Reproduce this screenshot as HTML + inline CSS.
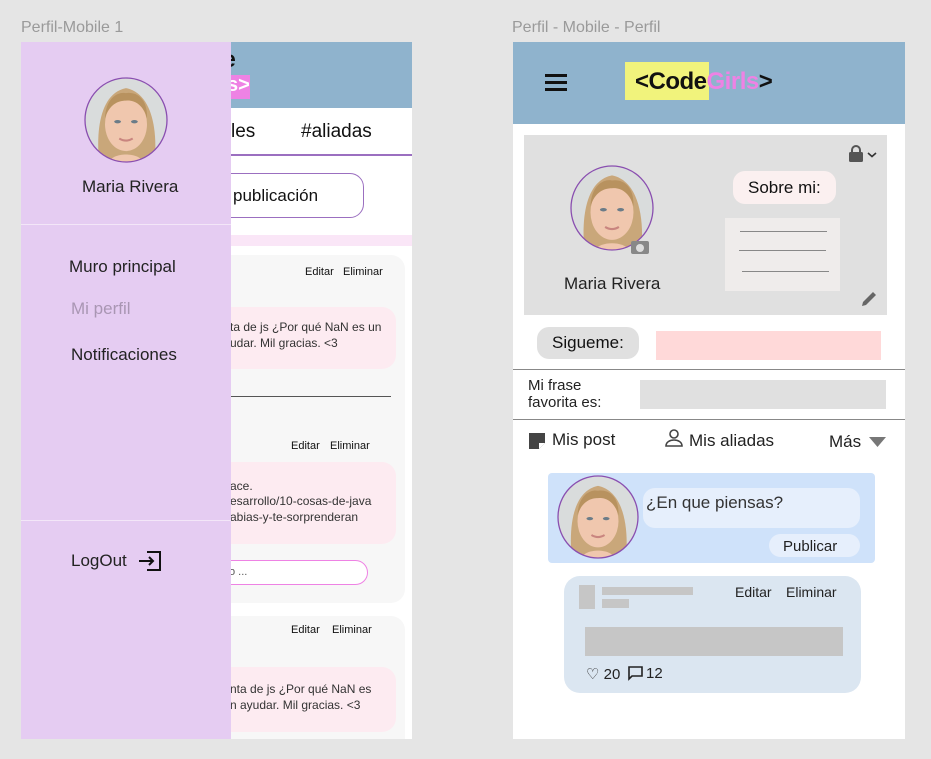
<!DOCTYPE html>
<html><head><meta charset="utf-8"><style>
*{margin:0;padding:0;box-sizing:border-box}
body{width:931px;height:759px;background:#e5e5e5;font-family:"Liberation Sans",sans-serif;position:relative;overflow:hidden;color:#111}
.a{position:absolute}
.t{position:absolute;white-space:nowrap}
</style></head><body>
<svg width="0" height="0" style="position:absolute"><defs>
<symbol id="face" viewBox="0 0 100 100">
<rect width="100" height="100" fill="#d9dcdc"/>
<path d="M18 100 C14 60 20 18 50 12 C80 18 88 60 84 100Z" fill="#c9a77a"/>
<ellipse cx="50" cy="55" rx="25" ry="32" fill="#f0c7ae"/>
<path d="M25 48 C26 22 42 16 50 18 C62 16 76 24 75 48 C70 30 58 26 50 27 C40 27 30 32 25 48Z" fill="#b8925f"/>
<ellipse cx="40" cy="52" rx="4" ry="2" fill="#6b7c88"/><ellipse cx="60" cy="52" rx="4" ry="2" fill="#6b7c88"/>
<path d="M42 72 Q50 77 58 72" stroke="#c9857f" stroke-width="2.5" fill="none"/>
<path d="M30 100 C34 88 66 88 70 100Z" fill="#f0c7ae"/>
</symbol></defs></svg>

<div class="t" style="left:21px;top:19px;font-size:16px;color:#9a9a9a">Perfil-Mobile 1</div>
<div class="t" style="left:512px;top:19px;font-size:16px;color:#9a9a9a">Perfil - Mobile - Perfil</div>

<!-- LEFT FRAME -->
<div class="a" style="left:21px;top:42px;width:391px;height:697px;background:#fff;overflow:hidden">
  <div class="a" style="left:0;top:0;width:391px;height:66px;background:#8fb3cd"></div>
  <div class="t" style="left:202px;top:4px;font-size:23px;font-weight:bold">e</div>
  <div class="a" style="left:200px;top:33px;width:29px;height:24px;background:#ee82e4"></div>
  <div class="t" style="left:206px;top:32px;font-size:20px;font-weight:bold;color:#fff">s&gt;</div>
  <div class="t" style="left:210px;top:79px;font-size:19px">les</div>
  <div class="t" style="left:280px;top:79px;font-size:19px">#aliadas</div>
  <div class="a" style="left:200px;top:112px;width:191px;height:2px;background:#9b6fc0"></div>
  <div class="a" style="left:150px;top:131px;width:193px;height:45px;border:1.5px solid #9b6fc0;border-radius:14px;background:#fff"></div>
  <div class="t" style="left:212px;top:144px;font-size:17px">publicación</div>
  <div class="a" style="left:200px;top:193px;width:191px;height:11px;background:#fae6f7"></div>
  <div class="a" style="left:150px;top:213px;width:234px;height:348px;background:#f7f7f7;border-radius:14px"></div>
  <div class="t" style="left:284px;top:224px;font-size:11px">Editar</div>
  <div class="t" style="left:322px;top:224px;font-size:11px">Eliminar</div>
  <div class="a" style="left:150px;top:265px;width:225px;height:62px;background:#fdebf1;border-radius:14px"></div>
  <div class="t" style="left:209px;top:278px;font-size:12px;color:#333">ta de js ¿Por qué NaN es un</div>
  <div class="t" style="left:209px;top:294px;font-size:12px;color:#333">udar. Mil gracias. &lt;3</div>
  <div class="a" style="left:200px;top:354px;width:170px;height:1px;background:#555"></div>
  <div class="t" style="left:270px;top:398px;font-size:11px">Editar</div>
  <div class="t" style="left:309px;top:398px;font-size:11px">Eliminar</div>
  <div class="a" style="left:150px;top:420px;width:225px;height:82px;background:#fdebf1;border-radius:14px"></div>
  <div class="t" style="left:209px;top:437px;font-size:12px;color:#333">ace.</div>
  <div class="t" style="left:209px;top:452px;font-size:12px;color:#333">esarrollo/10-cosas-de-java</div>
  <div class="t" style="left:209px;top:468px;font-size:12px;color:#333">abias-y-te-sorprenderan</div>
  <div class="a" style="left:150px;top:518px;width:197px;height:25px;border:1.5px solid #ee82e4;border-radius:13px;background:#fff"></div>
  <div class="t" style="left:208px;top:524px;font-size:11px;color:#555">o ...</div>
  <div class="a" style="left:150px;top:574px;width:234px;height:140px;background:#f7f7f7;border-radius:14px"></div>
  <div class="t" style="left:270px;top:582px;font-size:11px">Editar</div>
  <div class="t" style="left:311px;top:582px;font-size:11px">Eliminar</div>
  <div class="a" style="left:150px;top:625px;width:225px;height:65px;background:#fdebf1;border-radius:14px"></div>
  <div class="t" style="left:209px;top:640px;font-size:12px;color:#333">nta de js ¿Por qué NaN es</div>
  <div class="t" style="left:209px;top:656px;font-size:12px;color:#333">n ayudar. Mil gracias. &lt;3</div>
  <div class="a" style="left:0;top:0;width:210px;height:697px;background:#e5ccf2"></div>
  <div class="a" style="left:0;top:182px;width:210px;height:1px;background:#f3e6f8"></div>
  <div class="a" style="left:0;top:478px;width:210px;height:1px;background:#f3e6f8"></div>
  <svg class="a" style="left:63px;top:35px" width="84" height="86"><clipPath id="c1"><ellipse cx="42" cy="43" rx="41" ry="42"/></clipPath><use href="#face" width="84" height="86" preserveAspectRatio="none" clip-path="url(#c1)"/><ellipse cx="42" cy="43" rx="41" ry="42" fill="none" stroke="#8a4fb0" stroke-width="1.3"/></svg>
  <div class="t" style="left:61px;top:135px;font-size:17px;color:#222">Maria Rivera</div>
  <div class="t" style="left:48px;top:215px;font-size:17px;color:#222">Muro principal</div>
  <div class="t" style="left:50px;top:257px;font-size:17px;color:#a996b3">Mi perfil</div>
  <div class="t" style="left:50px;top:303px;font-size:17px;color:#222">Notificaciones</div>
  <div class="t" style="left:50px;top:509px;font-size:17px;color:#222">LogOut</div>
  <svg class="a" style="left:117px;top:508px" width="24" height="22" viewBox="0 0 24 22" fill="none" stroke="#111" stroke-width="2"><path d="M9 2H22V20H9"/><path d="M1 11H15M11 7l4 4-4 4"/></svg>
</div>

<!-- RIGHT FRAME -->
<div class="a" style="left:513px;top:42px;width:392px;height:697px;background:#fff;overflow:hidden">
  <div class="a" style="left:0;top:0;width:392px;height:82px;background:#8fb3cd"></div>
  <div class="a" style="left:32px;top:32px;width:22px;height:2.5px;background:#111"></div>
  <div class="a" style="left:32px;top:39px;width:22px;height:2.5px;background:#111"></div>
  <div class="a" style="left:32px;top:46px;width:22px;height:2.5px;background:#111"></div>
  <div class="a" style="left:112px;top:20px;width:84px;height:38px;background:#f1f37c"></div>
  <div class="t" style="left:122px;top:26px;font-size:24px;font-weight:bold;letter-spacing:-0.5px">&lt;Code<span style="color:#ee82e4">Girls</span>&gt;</div>
  <div class="a" style="left:11px;top:93px;width:363px;height:180px;background:#e0e0e0"></div>
  <svg class="a" style="left:335px;top:103px" width="34" height="18" viewBox="0 0 34 18"><rect x="1" y="7" width="14" height="10" rx="1.5" fill="#555"/><path d="M4 8V5a4 4 0 0 1 8 0v3" stroke="#555" stroke-width="2" fill="none"/><path d="M20 8l4 3.5 4-3.5" stroke="#333" stroke-width="1.6" fill="none"/></svg>
  <svg class="a" style="left:56px;top:122px" width="86" height="88"><clipPath id="c2"><ellipse cx="43" cy="44" rx="41" ry="42"/></clipPath><use href="#face" width="86" height="88" preserveAspectRatio="none" clip-path="url(#c2)"/><ellipse cx="43" cy="44" rx="41" ry="42" fill="none" stroke="#8a4fb0" stroke-width="1.3"/></svg>
  <div class="a" style="left:118px;top:199px;width:18px;height:13px;background:#888;border-radius:2px"></div>
  <div class="a" style="left:123px;top:202px;width:8px;height:8px;background:#ddd;border-radius:50%"></div>
  <div class="t" style="left:51px;top:232px;font-size:17px;color:#222">Maria Rivera</div>
  <div class="a" style="left:220px;top:129px;width:103px;height:33px;background:#fbf0f0;border-radius:12px"></div>
  <div class="t" style="left:235px;top:136px;font-size:17px">Sobre mi:</div>
  <div class="a" style="left:212px;top:176px;width:115px;height:73px;background:#efeceb"></div>
  <div class="a" style="left:227px;top:189px;width:87px;height:1px;background:#888"></div>
  <div class="a" style="left:226px;top:208px;width:87px;height:1px;background:#888"></div>
  <div class="a" style="left:229px;top:229px;width:87px;height:1px;background:#888"></div>
  <svg class="a" style="left:348px;top:249px" width="18" height="16" viewBox="0 0 18 16"><path d="M1 15l1-4L12 1l3 3L5 14z" fill="#666"/></svg>
  <div class="a" style="left:24px;top:285px;width:102px;height:32px;background:#e0e0e0;border-radius:12px"></div>
  <div class="t" style="left:39px;top:291px;font-size:17px">Sigueme:</div>
  <div class="a" style="left:143px;top:289px;width:225px;height:29px;background:#ffd9d9"></div>
  <div class="a" style="left:0;top:327px;width:392px;height:1px;background:#888"></div>
  <div class="t" style="left:15px;top:335px;font-size:15px;line-height:17px;color:#222">Mi frase<br>favorita es:</div>
  <div class="a" style="left:127px;top:338px;width:246px;height:29px;background:#e0e0e0"></div>
  <div class="a" style="left:0;top:377px;width:392px;height:1px;background:#888"></div>
  <svg class="a" style="left:15px;top:390px" width="18" height="18" viewBox="0 0 18 18"><path d="M1 1h16v10l-6 6H1z" fill="#444"/><path d="M11 17v-6h6" fill="#fff"/></svg>
  <div class="t" style="left:39px;top:388px;font-size:17px;color:#222">Mis post</div>
  <svg class="a" style="left:152px;top:387px" width="18" height="18" viewBox="0 0 18 18" fill="none" stroke="#444" stroke-width="1.6"><circle cx="9" cy="5" r="4"/><path d="M1 17c0-4 4-6 8-6s8 2 8 6z"/></svg>
  <div class="t" style="left:176px;top:389px;font-size:17px;color:#222">Mis aliadas</div>
  <div class="t" style="left:316px;top:390px;font-size:17px;color:#222">Más</div>
  <svg class="a" style="left:356px;top:394px" width="18" height="12"><path d="M0 1h17l-8.5 10z" fill="#777"/></svg>
  <div class="a" style="left:35px;top:431px;width:327px;height:90px;background:#cfe2fa;border-radius:4px"></div>
  <svg class="a" style="left:44px;top:433px" width="82" height="84"><clipPath id="c3"><ellipse cx="41" cy="42" rx="40" ry="41"/></clipPath><use href="#face" width="82" height="84" preserveAspectRatio="none" clip-path="url(#c3)"/><ellipse cx="41" cy="42" rx="40" ry="41" fill="none" stroke="#8a4fb0" stroke-width="1.3"/></svg>
  <div class="a" style="left:130px;top:446px;width:217px;height:40px;background:#e6effc;border-radius:12px"></div>
  <div class="t" style="left:133px;top:451px;font-size:17px;color:#333">¿En que piensas?</div>
  <div class="a" style="left:256px;top:492px;width:91px;height:23px;background:#e6effc;border-radius:12px"></div>
  <div class="t" style="left:270px;top:496px;font-size:15px;color:#222">Publicar</div>
  <div class="a" style="left:51px;top:534px;width:297px;height:117px;background:#dbe6f1;border-radius:16px"></div>
  <div class="a" style="left:66px;top:543px;width:16px;height:24px;background:#c6c6c6"></div>
  <div class="a" style="left:89px;top:545px;width:91px;height:8px;background:#c6c6c6"></div>
  <div class="a" style="left:89px;top:557px;width:27px;height:9px;background:#c6c6c6"></div>
  <div class="t" style="left:222px;top:542px;font-size:14px;color:#222">Editar</div>
  <div class="t" style="left:273px;top:542px;font-size:14px;color:#222">Eliminar</div>
  <div class="a" style="left:72px;top:585px;width:258px;height:29px;background:#c6c6c6"></div>
  <div class="t" style="left:73px;top:623px;font-size:15px;color:#222">♡ 20</div>
  <svg class="a" style="left:115px;top:624px" width="15" height="15" viewBox="0 0 15 15" fill="none" stroke="#222" stroke-width="1.6"><path d="M1 1h13v9H4l-3 3z"/></svg>
  <div class="t" style="left:133px;top:623px;font-size:15px;color:#222">12</div>
</div>
</body></html>
